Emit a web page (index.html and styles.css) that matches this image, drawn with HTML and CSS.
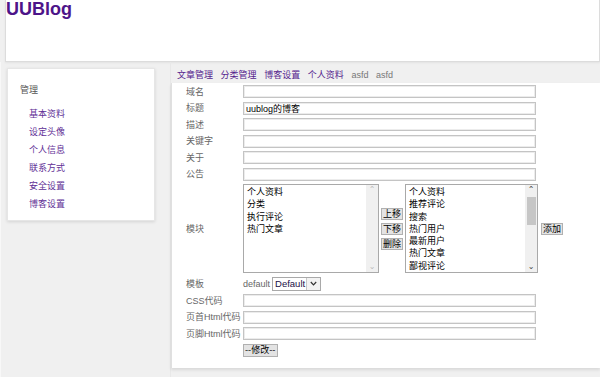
FILE: index.html
```html
<!DOCTYPE html>
<html lang="zh-CN">
<head>
  <meta charset="UTF-8" />
  <title>UUBlog - 博客设置</title>
  <link rel="stylesheet" href="styles.css">
</head>
<body>
  <!-- Header -->
  <div class="header">
    <a class="logo" href="#">UUBlog</a>
  </div>

  <div class="page">
    <!-- Sidebar -->
    <div class="aside">
      <div class="side-box">
        <div class="side-title">管理</div>
        <ul class="side-menu">
          <li><a href="#">基本资料</a></li>
          <li><a href="#">设定头像</a></li>
          <li><a href="#">个人信息</a></li>
          <li><a href="#">联系方式</a></li>
          <li><a href="#">安全设置</a></li>
          <li><a href="#">博客设置</a></li>
        </ul>
      </div>
    </div>

    <!-- Main -->
    <div class="main">
      <div class="tabs">
        <a href="#">文章管理</a>
        <a href="#">分类管理</a>
        <a href="#">博客设置</a>
        <a href="#">个人资料</a>
        <span>asfd</span>
        <span>asfd</span>
      </div>

      <div class="content">
        <table class="form">
          <tr><td class="label">域名</td><td><input class="text-input" type="text" value=""></td></tr>
          <tr><td class="label">标题</td><td><input class="text-input" type="text" value="uublog的博客"></td></tr>
          <tr><td class="label">描述</td><td><input class="text-input" type="text" value=""></td></tr>
          <tr><td class="label">关键字</td><td><input class="text-input" type="text" value=""></td></tr>
          <tr><td class="label">关于</td><td><input class="text-input" type="text" value=""></td></tr>
          <tr><td class="label">公告</td><td><input class="text-input" type="text" value=""></td></tr>
          <tr>
            <td class="label">模块</td>
            <td>
              <div class="modules">
                <div class="listbox left-list">
                  <div class="items">
                    <div>个人资料</div>
                    <div>分类</div>
                    <div>执行评论</div>
                    <div>热门文章</div>
                  </div>
                  <div class="scrollbar disabled">
                    <span class="arrow">&#8963;</span>
                    <span class="arrow">&#8964;</span>
                  </div>
                </div>
                <div class="move-btns">
                  <button class="btn">上移</button>
                  <button class="btn">下移</button>
                  <button class="btn">删除</button>
                </div>
                <div class="listbox right-list">
                  <div class="items">
                    <div>个人资料</div>
                    <div>推荐评论</div>
                    <div>搜索</div>
                    <div>热门用户</div>
                    <div>最新用户</div>
                    <div>热门文章</div>
                    <div>鄙视评论</div>
                  </div>
                  <div class="scrollbar">
                    <span class="arrow">&#8963;</span>
                    <span class="thumb"></span>
                    <span class="arrow">&#8964;</span>
                  </div>
                </div>
                <button class="btn add-btn">添加</button>
              </div>
            </td>
          </tr>
          <tr>
            <td class="label">模板</td>
            <td>
              <div class="theme-row">
                <span class="theme-name">default</span>
                <span class="select">
                  <span class="select-value">Default</span>
                  <span class="select-arrow">
                    <svg width="7" height="5" viewBox="0 0 7 5"><path d="M0.8 1 L3.5 3.8 L6.2 1" fill="none" stroke="#333" stroke-width="1.2"/></svg>
                  </span>
                </span>
              </div>
            </td>
          </tr>
          <tr><td class="label">CSS代码</td><td><input class="text-input" type="text" value=""></td></tr>
          <tr><td class="label">页首Html代码</td><td><input class="text-input" type="text" value=""></td></tr>
          <tr><td class="label">页脚Html代码</td><td><input class="text-input" type="text" value=""></td></tr>
          <tr><td class="label"></td><td><button class="btn submit-btn">--修改--</button></td></tr>
        </table>
      </div>
    </div>
  </div>
</body>
</html>
```

FILE: styles.css
```css
* {
  margin: 0;
  padding: 0;
  box-sizing: border-box;
}

body, html {
  height: 100%;
  overflow: hidden;
}

body {
  background: #f0f0f0;
  font-family: "Liberation Sans", "Noto Sans CJK SC", sans-serif;
  font-size: 9px;
  line-height: 12px;
  color: #333;
}

a {
  text-decoration: none;
}

/* header */
.header {
  margin-left: 5px;
  height: 62px;
  background: #fff;
  border: 1px solid #dcdcdc;
  border-top: none;
  box-shadow: 0 1px 2px rgba(0, 0, 0, 0.06);
}

.logo {
  display: block;
  font-size: 18px;
  font-weight: bold;
  line-height: 18px;
  color: #4d1489;
}

/* layout */
.page {
  display: flex;
}

.aside {
  width: 171px;
  flex-shrink: 0;
  padding: 6px 0 0 6px;
  min-height: 320px;
  border-left: 1px solid #f8f8f8;
  border-right: 1px solid #e8e8e8;
}

.side-box {
  width: 148px;
  background: #fff;
  border: 1px solid #e6e6e6;
  box-shadow: 0 1px 3px rgba(0, 0, 0, 0.12);
  padding: 15px 0 7px 12px;
}

.side-title {
  color: #555;
  line-height: 12px;
}

.side-menu {
  list-style: none;
  margin-top: 9px;
  padding-left: 9px;
}

.side-menu li {
  line-height: 18px;
}

.side-menu a {
  color: #5f2f96;
}

.main {
  flex: 1;
}

.tabs {
  padding: 7px 0 0 6px;
  height: 21px;
  line-height: 12px;
  display: flex;
  gap: 7.6px;
}

.tabs a {
  color: #55238e;
}

.tabs span {
  color: #777;
}

.content {
  background: #fff;
  border-left: 1px solid #e0e0e0;
  box-shadow: 0 2px 3px rgba(0, 0, 0, 0.1);
  padding: 0 0 10px 14px;
}

/* form table */
.form {
  border-collapse: collapse;
}

.form td {
  padding: 2px 0 1.5px 0;
  vertical-align: middle;
}

.form td.label {
  width: 57px;
  color: #666;
  white-space: nowrap;
}

.text-input {
  display: block;
  width: 293px;
  height: 13px;
  border: 1px solid #c4c4c4;
  box-shadow: inset 0 0 0 1px #ececec;
  font-family: "Liberation Sans", "Noto Sans CJK SC", sans-serif;
  font-size: 9px;
  color: #000;
  padding: 0 2px;
  outline: none;
}

.btn {
  font-family: "Noto Sans CJK SC", "Liberation Sans", sans-serif;
  font-size: 9px;
  line-height: 10px;
  height: 12px;
  padding: 0 1px;
  background: #e3e3e3;
  border: 1px solid #b0b0b0;
  color: #000;
  cursor: pointer;
}

/* modules */
.modules {
  display: flex;
  align-items: center;
}

.listbox {
  display: flex;
  height: 89px;
  border: 1px solid #a9a9a9;
  background: #fff;
}

.left-list {
  width: 136px;
}

.right-list {
  width: 133px;
}

.items {
  flex: 1;
  padding: 1px 0 0 3px;
  color: #000;
  line-height: 12.3px;
  overflow: hidden;
}

.scrollbar {
  width: 12px;
  background: #f0f0f0;
  display: flex;
  flex-direction: column;
  align-items: center;
  justify-content: space-between;
}

.arrow {
  font-family: "DejaVu Sans", sans-serif;
  font-size: 8px;
  line-height: 10px;
  height: 10px;
  color: #444;
}

.scrollbar.disabled .arrow {
  color: #bbb;
}

.thumb {
  width: 9px;
  height: 28px;
  background: #c6c6c6;
  margin-top: 2px;
  margin-bottom: auto;
}

.move-btns {
  display: flex;
  flex-direction: column;
  gap: 3px;
  margin: 0 2px;
}

.add-btn {
  margin-left: 3px;
}

/* template */
.theme-row {
  display: flex;
  align-items: center;
  gap: 2px;
}

.theme-name {
  color: #666;
}

.select {
  display: flex;
  width: 49px;
  height: 14px;
  border: 1px solid #a9a9a9;
  background: #fff;
}

.select-value {
  flex: 1;
  padding-left: 2px;
  font-size: 9.5px;
  line-height: 12px;
  color: #1a1046;
}

.select-arrow {
  width: 14px;
  border-left: 1px solid #c8c8c8;
  background: #f3f3f3;
  display: flex;
  align-items: center;
  justify-content: center;
}

.submit-btn {
  height: 13px;
  padding: 0 1px;
  font-size: 9px;
}
```
